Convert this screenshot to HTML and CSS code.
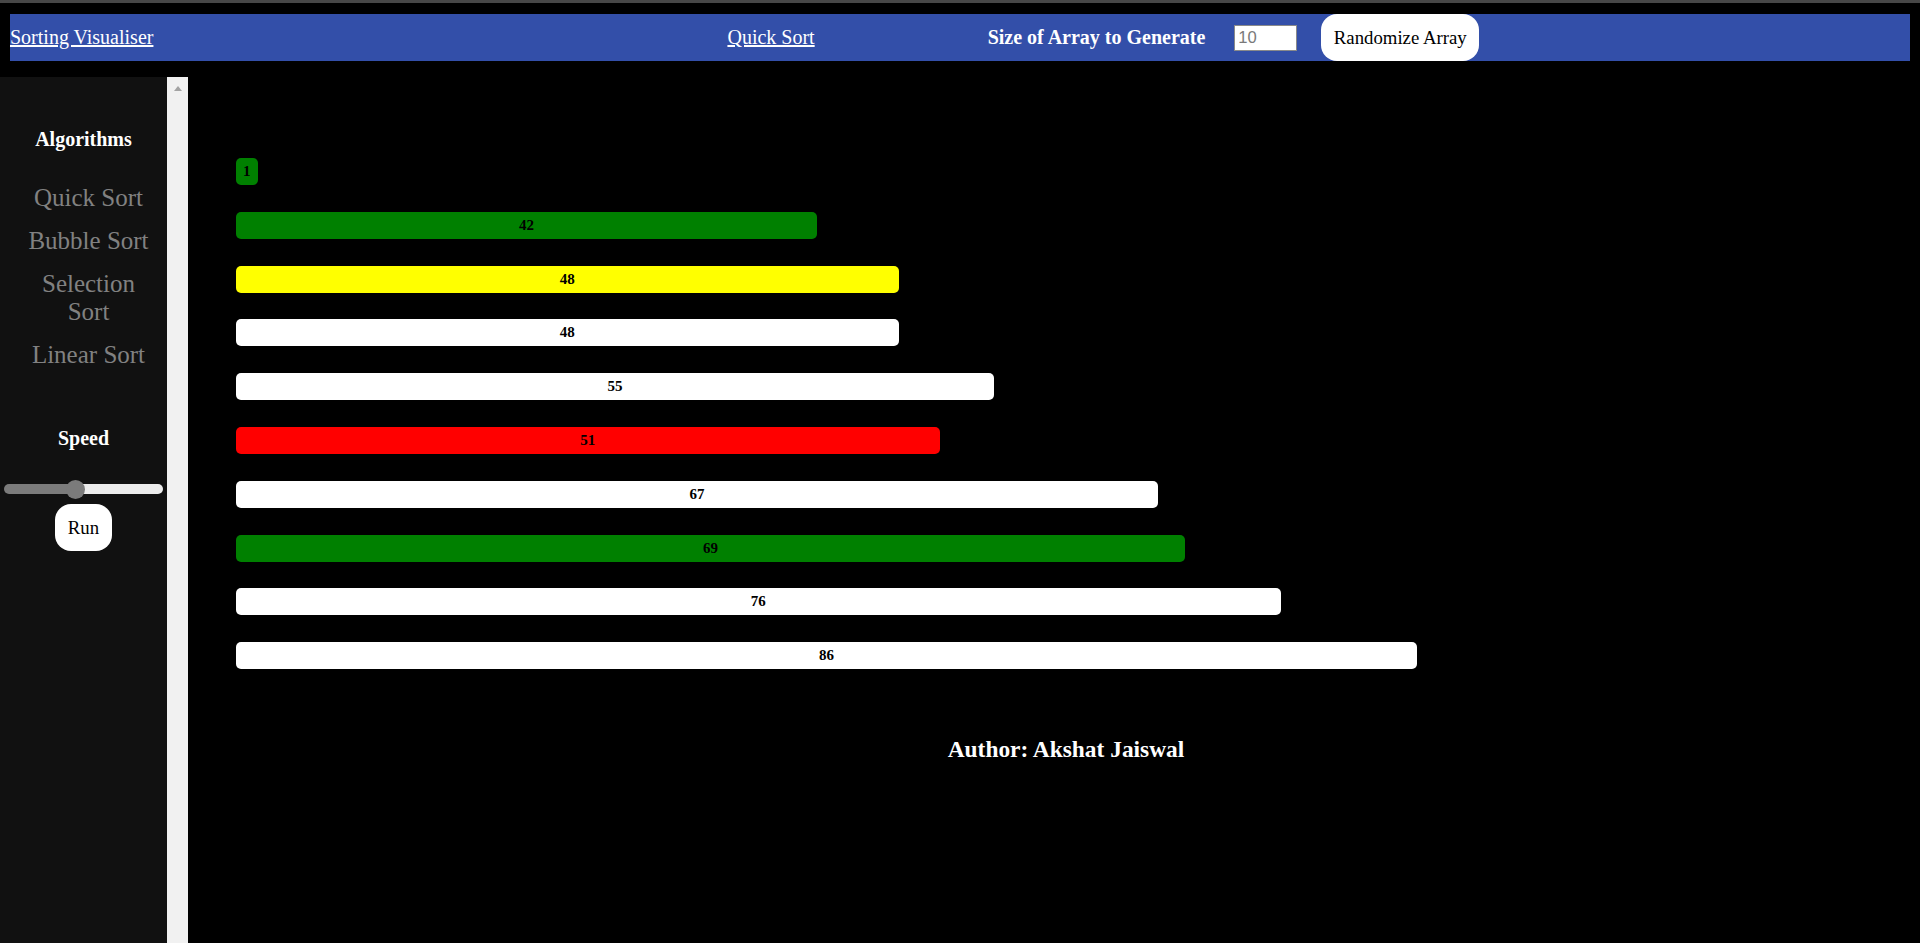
FILE: index.html
```html
<!DOCTYPE html>
<html lang="en">
<head>
<meta charset="utf-8">
<title>Sorting Visualiser</title>
<link rel="stylesheet" href="styles.css">
</head>
<body>
<div class="page">
  <div class="topline"></div>
  <header class="header-wrap">
    <nav class="navbar">
      <a class="nav-link brand" href="#">Sorting Visualiser</a>
      <a class="nav-link current" href="#">Quick Sort</a>
      <span class="size-label">Size of Array to Generate</span>
      <input class="size-input" type="text" placeholder="10">
      <button class="btn randomize">Randomize Array</button>
    </nav>
  </header>
  <div class="workspace">
    <aside class="sidebar">
      <div class="side-content">
        <p class="side-title algo-title">Algorithms</p>
        <a class="side-link" href="#">Quick Sort</a>
        <a class="side-link" href="#">Bubble Sort</a>
        <a class="side-link" href="#">Selection Sort</a>
        <a class="side-link" href="#">Linear Sort</a>
        <p class="side-title speed-title">Speed</p>
        <input class="speed-range" type="range" min="0" max="100" value="44">
        <button class="btn run">Run</button>
      </div>
      <div class="side-scroll"><span class="scroll-arrow"></span></div>
    </aside>
    <main class="main">
      <div class="bars">
        <div class="bar green" style="--v:1">1</div>
        <div class="bar green" style="--v:42">42</div>
        <div class="bar yellow" style="--v:48">48</div>
        <div class="bar white" style="--v:48">48</div>
        <div class="bar white" style="--v:55">55</div>
        <div class="bar red" style="--v:51">51</div>
        <div class="bar white" style="--v:67">67</div>
        <div class="bar green" style="--v:69">69</div>
        <div class="bar white" style="--v:76">76</div>
        <div class="bar white" style="--v:86">86</div>
      </div>
      <h3 class="author">Author: Akshat Jaiswal</h3>
    </main>
  </div>
</div>
</body>
</html>
```
FILE: styles.css
```css
* {
  box-sizing: border-box;
}

html, body {
  margin: 0;
  padding: 0;
  background: #000;
  font-family: "Liberation Serif", "Times New Roman", serif;
}

.page {
  height: 100vh;
  display: flex;
  flex-direction: column;
  overflow: hidden;
}

.topline {
  height: 3px;
  background: #474747;
  flex-shrink: 0;
}

.header-wrap {
  padding: 11px 10px 0;
  flex-shrink: 0;
}

.navbar {
  height: 47px;
  background: #334fa9;
  display: flex;
  align-items: center;
}

.nav-link {
  color: #fff;
  font-size: 20px;
  text-decoration: underline;
}

.current {
  margin-left: 574px;
}

.size-label {
  margin-left: 173px;
  color: #fff;
  font-weight: bold;
  font-size: 20px;
}

.size-input {
  margin-left: 29px;
  width: 63px;
  height: 26px;
  border: 1px solid #8a8a8a;
  border-radius: 0;
  padding: 1px 3px;
  font-family: "Liberation Sans", Arial, sans-serif;
  font-size: 16.6px;
  background: #fff;
  color: #000;
}

.size-input::placeholder {
  color: #7a7a7a;
}

.btn {
  border: none;
  background: #fff;
  color: #000;
  font-family: "Liberation Serif", "Times New Roman", serif;
  font-size: 18.75px;
  border-radius: 16px;
  padding: 12.5px;
  line-height: 22px;
}

.randomize {
  margin-left: 24px;
  height: 47px;
}

.workspace {
  flex: 1;
  display: flex;
  margin-top: 16px;
  min-height: 0;
}

.sidebar {
  width: 188px;
  flex-shrink: 0;
  display: flex;
  background: #111;
}

.side-content {
  width: 167px;
  padding-top: 25px;
  display: flex;
  flex-direction: column;
}

.side-title {
  color: #fff;
  font-weight: bold;
  font-size: 20px;
  line-height: 23px;
  text-align: center;
  margin: 0;
}

.algo-title {
  margin-top: 26px;
  margin-bottom: 25px;
}

.speed-title {
  margin-top: 51px;
}

.side-link {
  display: block;
  padding: 7.5px 10px 7.5px 20px;
  font-size: 25px;
  line-height: 28px;
  color: #818181;
  text-decoration: none;
  text-align: center;
}

.speed-range {
  -webkit-appearance: none;
  appearance: none;
  display: block;
  width: 159px;
  height: 10px;
  margin: 34px auto 0;
  border-radius: 5px;
  background: linear-gradient(to right, #7b7b7b 0, #7b7b7b 71px, #ececec 71px, #ececec 100%);
  outline: none;
}

.speed-range::-webkit-slider-thumb {
  -webkit-appearance: none;
  appearance: none;
  width: 19px;
  height: 19px;
  border-radius: 50%;
  background: #7b7b7b;
  border: none;
}

.run {
  display: block;
  margin: 10px auto 0;
  width: 57px;
  height: 47px;
}

.side-scroll {
  width: 21px;
  background: #f1f1f1;
  display: flex;
  justify-content: center;
  padding-top: 9px;
}

.scroll-arrow {
  width: 0;
  height: 0;
  border-left: 4.5px solid transparent;
  border-right: 4.5px solid transparent;
  border-bottom: 5px solid #a3a3a3;
}

.main {
  flex: 1;
  padding: 81px 24px 0 48px;
}

.bars {
  display: flex;
  flex-direction: column;
  align-items: flex-start;
  gap: 26.8px;
}

.bar {
  width: calc(var(--v) * 13.64px + 8px);
  height: 27px;
  border-radius: 5px;
  display: flex;
  align-items: center;
  justify-content: center;
  font-weight: bold;
  font-size: 15px;
  color: #000;
}

.green { background: #008000; }
.yellow { background: #ffff00; }
.white { background: #fff; }
.red { background: #ff0000; }

.author {
  margin: 67px 0 0;
  text-align: center;
  color: #fff;
  font-size: 23.4px;
  font-weight: bold;
  line-height: 27px;
}
```
